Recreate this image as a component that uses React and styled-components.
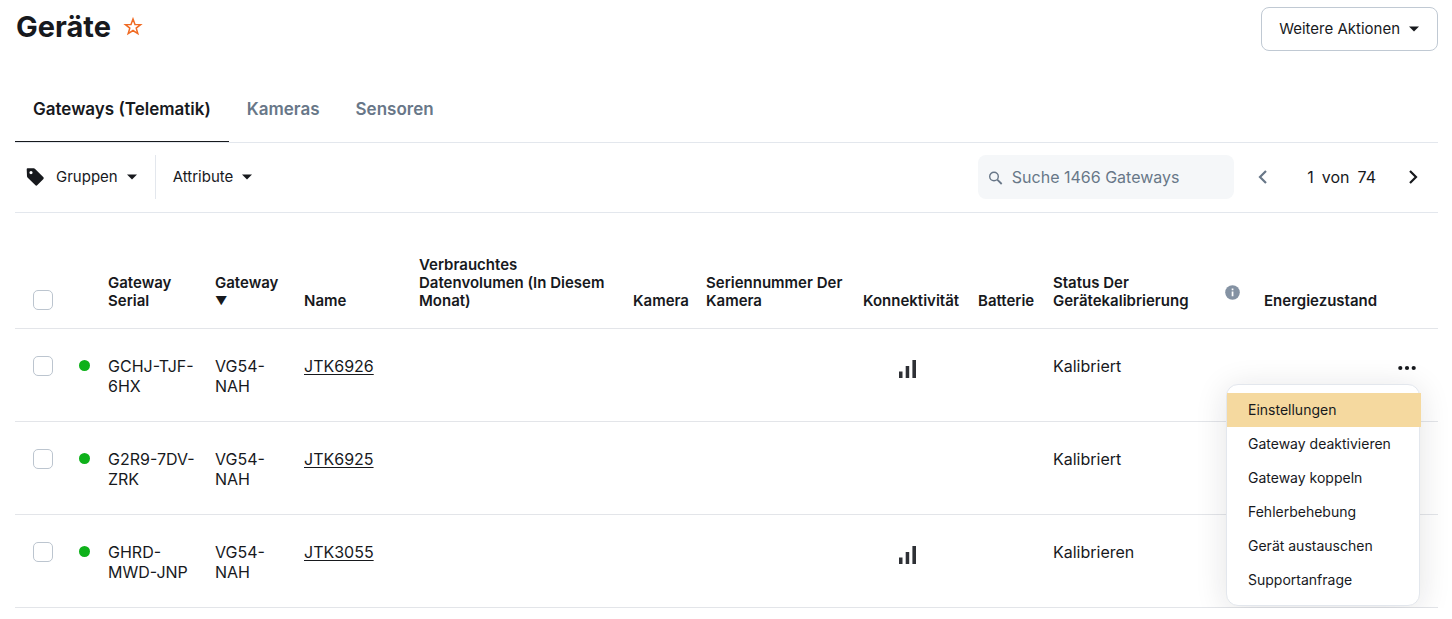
import React, { useState } from 'react'
import styled, { createGlobalStyle } from 'styled-components'

const GlobalStyle = createGlobalStyle`
  * {
    box-sizing: border-box;
  }

  body {
    margin: 0;
    background: #fff;
    color: #17191d;
    font-family: Inter, 'Liberation Sans', sans-serif;
    font-size: 16px;
    line-height: 20px;
  }

  button,
  input {
    font: inherit;
    color: inherit;
  }
`

const Page = styled.main`
  padding: 7px 14px 0 15px;
`

const Header = styled.header`
  display: flex;
  justify-content: space-between;
  align-items: flex-start;
  padding-bottom: 36px;
`

const TitleGroup = styled.div`
  display: flex;
  align-items: center;
  gap: 12px;
  padding-left: 1px;
`

const Title = styled.h1`
  margin: 0;
  font-size: 29px;
  font-weight: 700;
  line-height: 40px;
`

const PlainButton = styled.button`
  display: flex;
  align-items: center;
  justify-content: center;
  padding: 0;
  border: 0;
  background: none;
  cursor: pointer;
`

const OutlineButton = styled(PlainButton)`
  gap: 8px;
  height: 44px;
  padding: 0 17px;
  border: 1px solid #c0c9d3;
  border-radius: 8px;
  font-size: 15px;
`

const Tabs = styled.div`
  display: flex;
  border-bottom: 1px solid #e3e7ed;
`

const Tab = styled.button`
  padding: 10px 18px 20px;
  border: 0;
  border-bottom: 1px solid ${props => (props.$active ? '#17191d' : 'transparent')};
  background: none;
  color: ${props => (props.$active ? '#17191d' : '#687788')};
  font-size: 17px;
  font-weight: 600;
  line-height: 24px;
  cursor: pointer;
`

const Toolbar = styled.div`
  display: flex;
  justify-content: space-between;
  padding: 12px 0 13px;
  border-bottom: 1px solid #e3e7ed;
`

const ToolGroup = styled.div`
  display: flex;
  align-items: center;
`

const FilterButton = styled(PlainButton)`
  gap: 8px;
  height: 44px;
  padding: 0 17px;
  font-size: 15px;

  &:first-child {
    padding-left: 11px;
    border-right: 1px solid #e3e7ed;
  }
`

const TagIcon = styled.svg`
  margin-right: 4px;
`

const SearchBox = styled.label`
  display: flex;
  align-items: center;
  gap: 9px;
  width: 256px;
  height: 44px;
  margin-right: 4px;
  padding: 0 10px;
  border-radius: 8px;
  background: #f5f7f9;
`

const SearchInput = styled.input`
  flex: 1;
  min-width: 0;
  padding: 0;
  border: 0;
  outline: 0;
  background: none;

  &::placeholder {
    color: #687788;
    opacity: 1;
  }
`

const Pager = styled.div`
  display: flex;
  align-items: center;
  gap: 8px;
  margin: 0 12px 0 4px;
`

const PageInput = styled.input`
  width: 22px;
  padding: 0;
  border: 0;
  background: none;
  text-align: right;
`

const PageButton = styled(PlainButton)`
  width: 50px;
  height: 44px;
`

const Table = styled.table`
  width: 100%;
  table-layout: fixed;
  border-collapse: separate;
  border-spacing: 0;
`

const HeadCell = styled.th`
  padding: 43px ${props => (props.$tight ? '0' : '9px')} 18px 9px;
  border-bottom: 1px solid #e3e5e9;
  font-size: 15px;
  font-weight: 600;
  line-height: 18px;
  text-align: left;
  vertical-align: bottom;
`

const SortArrow = styled.span`
  display: block;
  font-size: 12px;
`

const Cell = styled.td`
  padding: 27px 9px 25px;
  border-bottom: 1px solid #e3e5e9;
  vertical-align: top;
`

const SelectHead = styled(HeadCell)`
  padding-left: 18px;
`

const SelectCell = styled(Cell)`
  padding-left: 18px;
`

const SerialCell = styled(Cell)`
  padding-right: 0;
`

const Checkbox = styled.input.attrs({ type: 'checkbox' })`
  display: block;
  appearance: none;
  width: 20px;
  height: 20px;
  margin: 0;
  border: 1px solid #bcc5cf;
  border-radius: 5px;
  background: #fff;

  &:checked {
    background: #17191d;
  }
`

const Dot = styled.span`
  display: block;
  width: 11px;
  height: 11px;
  margin-top: 4px;
  border-radius: 50%;
  background: #0eb11a;
`

const NameLink = styled.a`
  color: inherit;
  text-underline-offset: 2px;
`

const Signal = styled.svg`
  display: block;
  margin: 4px auto 0 36px;
`

const InfoIcon = styled.svg`
  display: block;
  margin-bottom: 10px;
`

const Actions = styled.div`
  position: relative;
  display: flex;
  justify-content: flex-end;
  padding-right: 9px;
`

const MoreButton = styled(PlainButton)`
  width: 26px;
  height: 24px;
`

const Menu = styled.div`
  position: absolute;
  top: 28px;
  right: 9px;
  z-index: 1;
  width: 194px;
  padding: 8px 0;
  border: 1px solid #e3e7ed;
  border-radius: 12px;
  background: #fff;
  box-shadow: 0 4px 32px rgba(23, 25, 29, 0.12);
`

const MenuItem = styled.button`
  display: block;
  width: ${props => (props.$active ? 'calc(100% + 2px)' : '100%')};
  height: 34px;
  padding: 0 21px;
  border: 0;
  background: ${props => (props.$active ? '#f5d99f' : 'none')};
  font-size: 14px;
  text-align: left;
  white-space: nowrap;
  cursor: pointer;
`

const tabs = ['Gateways (Telematik)', 'Kameras', 'Sensoren']

const columnWidths = [55, 29, 107, 89, 115, 214, 73, 157, 115, 75, 172, 39, 130, 53]

const devices = [
  { serial: 'GCHJ-TJF-6HX', gateway: 'VG54-NAH', name: 'JTK6926', signal: true, status: 'Kalibriert' },
  { serial: 'G2R9-7DV-ZRK', gateway: 'VG54-NAH', name: 'JTK6925', signal: false, status: 'Kalibriert' },
  { serial: 'GHRD-MWD-JNP', gateway: 'VG54-NAH', name: 'JTK3055', signal: true, status: 'Kalibrieren' },
]

const menuItems = [
  'Einstellungen',
  'Gateway deaktivieren',
  'Gateway koppeln',
  'Fehlerbehebung',
  'Gerät austauschen',
  'Supportanfrage',
]

const Caret = () => (
  <svg width="12" height="6" viewBox="0 0 12 6" aria-hidden="true">
    <path d="M1 0.5h10L6 5.5z" fill="#17191d" />
  </svg>
)

const Chevron = ({ left }) => (
  <svg width="10" height="14" viewBox="0 0 10 14" fill="none" aria-hidden="true">
    <path
      d={left ? 'M8 1L2 7L8 13' : 'M2 1L8 7L2 13'}
      stroke={left ? '#687788' : '#17191d'}
      strokeWidth="2.2"
    />
  </svg>
)

const DeviceRow = ({ device, menuOpen, onToggle }) => (
  <tr>
    <SelectCell>
      <Checkbox aria-label={device.name} />
    </SelectCell>
    <Cell>
      <Dot />
    </Cell>
    <SerialCell>{device.serial}</SerialCell>
    <Cell>{device.gateway}</Cell>
    <Cell>
      <NameLink href="#">{device.name}</NameLink>
    </Cell>
    <Cell />
    <Cell />
    <Cell />
    <Cell>
      {device.signal && (
        <Signal width="18" height="18" viewBox="0 0 18 18" fill="#2e3035">
          <path d="M0 11.5h3.5V18H0zM6.7 6h3.5v12H6.7zM13.4 0h3.6v18h-3.6z" />
        </Signal>
      )}
    </Cell>
    <Cell />
    <Cell colSpan={2}>{device.status}</Cell>
    <Cell colSpan={2}>
      {onToggle && (
        <Actions>
          <MoreButton aria-label="Aktionen" aria-expanded={menuOpen} onClick={onToggle}>
            <svg width="18" height="6" viewBox="0 0 18 6" fill="#17191d">
              <circle cx="2.3" cy="3" r="2.1" />
              <circle cx="9" cy="3" r="2.1" />
              <circle cx="15.7" cy="3" r="2.1" />
            </svg>
          </MoreButton>
          {menuOpen && (
            <Menu role="menu">
              {menuItems.map((item, i) => (
                <MenuItem key={item} role="menuitem" $active={i === 0}>
                  {item}
                </MenuItem>
              ))}
            </Menu>
          )}
        </Actions>
      )}
    </Cell>
  </tr>
)

const App = () => {
  const [tab, setTab] = useState(tabs[0])
  const [page, setPage] = useState('1')
  const [menuOpen, setMenuOpen] = useState(true)

  return (
    <>
      <GlobalStyle />
      <Page>
        <Header>
          <TitleGroup>
            <Title>Geräte</Title>
            <PlainButton aria-label="Favorit">
              <svg width="20" height="20" viewBox="0 0 20 20" fill="none">
                <path
                  d="M10 2L12 7.4L17.6 7.6L13.2 11.1L14.8 16.6L10 13.5L5.2 16.6L6.8 11.1L2.4 7.6L8 7.4Z"
                  stroke="#f06a22"
                  strokeWidth="1.5"
                />
              </svg>
            </PlainButton>
          </TitleGroup>
          <OutlineButton>
            Weitere Aktionen
            <Caret />
          </OutlineButton>
        </Header>

        <Tabs role="tablist">
          {tabs.map(name => (
            <Tab
              key={name}
              role="tab"
              aria-selected={tab === name}
              $active={tab === name}
              onClick={() => setTab(name)}
            >
              {name}
            </Tab>
          ))}
        </Tabs>

        <Toolbar>
          <ToolGroup>
            <FilterButton>
              <TagIcon width="18" height="18" viewBox="0 0 18 18" aria-hidden="true">
                <path
                  d="M1.5 0.300H7.800C8.200 0.300 8.600 0.500 8.900 0.800L17.200 9.100C17.900 9.800 17.900 10.600 17.200 11.300L11.400 17.100C10.700 17.800 9.900 17.800 9.200 17.100L1.500 9.400C1.200 9.100 1 8.700 1 8.300L0.700 1.300C0.700 0.700 1 0.300 1.500 0.300ZM5 3A1.600 1.600 0 1 0 5 6.200A1.600 1.600 0 1 0 5 3Z"
                  fill="#17191d"
                  fillRule="evenodd"
                />
              </TagIcon>
              Gruppen
              <Caret />
            </FilterButton>
            <FilterButton>
              Attribute
              <Caret />
            </FilterButton>
          </ToolGroup>
          <ToolGroup>
            <SearchBox>
              <svg width="15" height="15" viewBox="0 0 15 15" fill="none" stroke="#687788" aria-hidden="true">
                <circle cx="6" cy="6.5" r="4.3" strokeWidth="1.4" />
                <path d="M9.3 9.7L13.7 14" strokeWidth="1.8" />
              </svg>
              <SearchInput placeholder="Suche 1466 Gateways" aria-label="Suche" />
            </SearchBox>
            <PageButton aria-label="Vorherige Seite">
              <Chevron left />
            </PageButton>
            <Pager>
              <PageInput aria-label="Seite" value={page} onChange={e => setPage(e.target.value)} />
              <span>von</span>
              <span>74</span>
            </Pager>
            <PageButton aria-label="Nächste Seite">
              <Chevron />
            </PageButton>
          </ToolGroup>
        </Toolbar>

        <Table>
          <colgroup>
            {columnWidths.map((width, i) => (
              <col key={i} width={width} />
            ))}
          </colgroup>
          <thead>
            <tr>
              <SelectHead>
                <Checkbox aria-label="Alle auswählen" />
              </SelectHead>
              <HeadCell />
              <HeadCell>Gateway Serial</HeadCell>
              <HeadCell>
                Gateway <SortArrow>▼</SortArrow>
              </HeadCell>
              <HeadCell>Name</HeadCell>
              <HeadCell>Verbrauchtes Datenvolumen (In Diesem Monat)</HeadCell>
              <HeadCell $tight>Kamera</HeadCell>
              <HeadCell>Seriennummer Der Kamera</HeadCell>
              <HeadCell>Konnektivität</HeadCell>
              <HeadCell $tight>Batterie</HeadCell>
              <HeadCell>Status Der Gerätekalibrierung</HeadCell>
              <HeadCell>
                <InfoIcon width="15" height="15" viewBox="0 0 15 15" aria-hidden="true">
                  <circle cx="7.5" cy="7.5" r="7.3" fill="#8492a3" />
                  <path d="M6.7 3.6h1.7v1.7H6.7zM6.7 6.4h1.7v4.9H6.7z" fill="#fff" />
                </InfoIcon>
              </HeadCell>
              <HeadCell>Energiezustand</HeadCell>
              <HeadCell />
            </tr>
          </thead>
          <tbody>
            {devices.map((device, i) => (
              <DeviceRow
                key={device.name}
                device={device}
                menuOpen={i === 0 && menuOpen}
                onToggle={i === 0 ? () => setMenuOpen(!menuOpen) : undefined}
              />
            ))}
          </tbody>
        </Table>
      </Page>
    </>
  )
}

export default App
